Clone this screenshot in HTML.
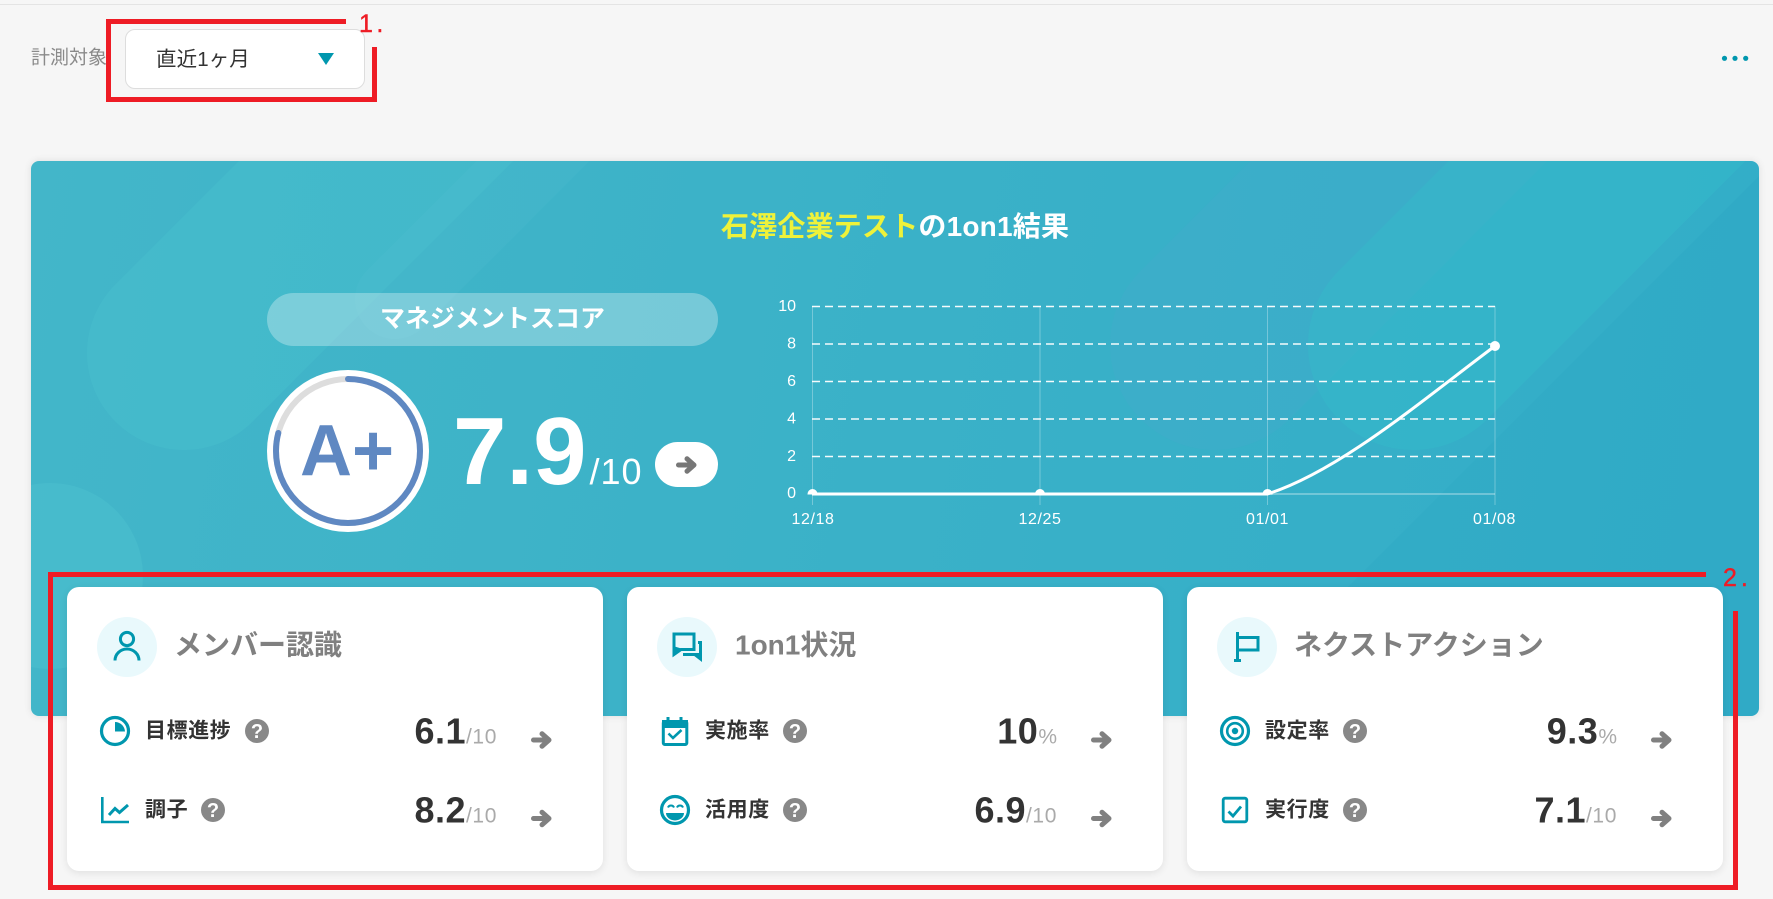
<!DOCTYPE html>
<html lang="ja"><head><meta charset="utf-8"><title>1on1結果</title>
<style>
html,body{margin:0;padding:0;width:1773px;height:899px;overflow:hidden;background:#f6f6f6}
body{position:relative;font-family:"Liberation Sans","Noto Sans CJK JP",sans-serif}
.a{position:absolute;box-sizing:border-box}
.card{position:absolute;top:587px;width:536px;height:284px;background:#fff;border-radius:12px;box-shadow:0 2px 8px rgba(0,0,0,.09)}
.r{position:absolute;background:#ee1c25}
svg{position:absolute;left:0;top:0}
text{font-family:"Liberation Sans","Noto Sans CJK JP",sans-serif}
</style></head><body>
<div class="a" style="left:0;top:4px;width:1773px;height:1px;background:#e4e4e4"></div>
<div class="a" style="left:125px;top:29px;width:240px;height:60px;background:#fff;border:1px solid #ddd;border-radius:10px"></div>
<div class="a" style="left:31px;top:161px;width:1728px;height:555px;border-radius:8px;overflow:hidden;box-shadow:0 0 8px rgba(0,0,0,.1);background:linear-gradient(100deg,#43b6c9 0%,#3ab1c8 50%,#32adc8 100%)">
<svg width="1728" height="555" viewBox="31 161 1728 555" fill="none">
<g stroke-linecap="round">
<path d="M184 353L600 -63" stroke="#4cc6d2" stroke-opacity=".3" stroke-width="194"/>
<path d="M395 299L800 -106" stroke="#5cc9d6" stroke-opacity=".14" stroke-width="80"/>
<path d="M1215 345L1600 -40" stroke="#4aaace" stroke-opacity=".26" stroke-width="210"/>
<path d="M1413 345L1800 -42" stroke="#35bdca" stroke-opacity=".38" stroke-width="210"/>
</g>
<circle cx="50" cy="576" r="93" fill="#55c6d2" fill-opacity=".32"/>
<path d="M1759 176V716H1219Z" fill="#28a0bd" fill-opacity=".2"/>
</svg></div>
<div class="a" style="left:267px;top:293px;width:451px;height:53px;border-radius:27px;background:rgba(255,255,255,.3)"></div>
<div class="a" style="left:267px;top:370px;width:162px;height:162px;border-radius:50%;background:#fff"></div>
<div class="a" style="left:655px;top:442px;width:63px;height:45px;border-radius:23px;background:#fff"></div>
<div class="card" style="left:67px"></div>
<div class="card" style="left:627px"></div>
<div class="card" style="left:1187px"></div>
<div class="r" style="left:106px;top:19px;width:240px;height:5px"></div>
<div class="r" style="left:106px;top:19px;width:5px;height:83px"></div>
<div class="r" style="left:106px;top:97px;width:271px;height:5px"></div>
<div class="r" style="left:372px;top:47px;width:5px;height:55px"></div>
<div class="r" style="left:48px;top:572px;width:1658px;height:5px"></div>
<div class="r" style="left:48px;top:572px;width:5px;height:318px"></div>
<div class="r" style="left:48px;top:885px;width:1690px;height:5px"></div>
<div class="r" style="left:1733px;top:611px;width:5px;height:279px"></div>

<svg width="1773" height="899" viewBox="0 0 1773 899" fill="none">
<text x="359" y="32" font-size="25" fill="#ee1c25" stroke="#ee1c25" stroke-width=".4" letter-spacing="3.5">1.</text>
<text x="1723" y="586" font-size="25" fill="#ee1c25" stroke="#ee1c25" stroke-width=".4" letter-spacing="4">2.</text>
<text x="31" y="63.5" font-size="19" fill="#8a8a8a">計測対象</text>
<text x="156" y="66" font-size="20.5" fill="#333" letter-spacing=".1">直近1ヶ月</text>
<path d="M318 53H334L326 65Z" fill="#0097ae"/>
<circle cx="1724.5" cy="58.3" r="2.6" fill="#0097ae"/><circle cx="1735" cy="58.3" r="2.6" fill="#0097ae"/><circle cx="1745.7" cy="58.3" r="2.6" fill="#0097ae"/>

<text x="721" y="236" font-size="28" font-weight="700" letter-spacing=".2"><tspan fill="#eef23a">石澤企業テスト</tspan><tspan fill="#fff">の1on1結果</tspan></text>
<text x="380" y="327" font-size="25" font-weight="700" fill="#fff">マネジメントスコア</text>

<circle cx="348" cy="451" r="72" stroke="#ddd" stroke-width="6"/>
<circle cx="348" cy="451" r="72" stroke="#5f88c2" stroke-width="6" stroke-linecap="round" stroke-dasharray="357.4 500" transform="rotate(-90 348 451)"/>
<text x="300" y="475" font-size="72" font-weight="700" fill="#5f88c2">A+</text>
<text x="453" y="484" fill="#fff"><tspan font-size="96" font-weight="700">7.9</tspan><tspan font-size="36" dx="3" letter-spacing="1">/10</tspan></text>
<g transform="translate(676 456)"><path d="M2.5 9H17M11 2.8L18 9L11 15.2" stroke="#777" stroke-width="5" stroke-linecap="round" stroke-linejoin="round"/></g>

<g stroke="#fff" stroke-opacity=".3"><path d="M812.5 306V505M1040 306V505M1267.5 306V505M1495 306V505"/><path d="M1267 494H1495" stroke-width="2"/></g>
<g stroke="#fff" stroke-width="1.5" stroke-dasharray="8 5" stroke-opacity=".95"><path d="M812 306.5H1495M812 344H1495M812 381.5H1495M812 419H1495M812 456.5H1495"/></g>
<clipPath id="c"><rect x="800" y="300" width="710" height="194.5"/></clipPath>
<g clip-path="url(#c)" fill="#fff"><circle cx="812.5" cy="494" r="5"/><circle cx="1040" cy="494" r="5"/><circle cx="1267.5" cy="494" r="5"/><circle cx="1495" cy="346" r="5"/></g>
<path d="M812 494H1267.5C1340 471 1425 398 1495 346" stroke="#fff" stroke-width="3"/>
<g fill="#fff" font-size="16" text-anchor="end">
<text x="796" y="311">10</text><text x="796" y="348.5">8</text><text x="796" y="386">6</text><text x="796" y="423.5">4</text><text x="796" y="461">2</text><text x="796" y="498">0</text></g>
<g fill="#fff" font-size="16" letter-spacing=".6" text-anchor="middle">
<text x="813" y="524">12/18</text><text x="1040" y="524">12/25</text><text x="1267.5" y="524">01/01</text><text x="1494.5" y="524">01/08</text></g>

<!-- header circles -->
<circle cx="127" cy="647" r="30" fill="#e9f9fc"/><circle cx="687" cy="647" r="30" fill="#e9f9fc"/><circle cx="1247" cy="647" r="30" fill="#e9f9fc"/>
<g stroke="#0097ae" stroke-width="3">
<circle cx="127" cy="639" r="6.6"/><path d="M115 660.5a12 11.5 0 0 1 24 0"/>
<path d="M674 634H694V649.5H681L674 654.5Z"/><path d="M698 642.5H700.5V659M700 654.5H683"/>
<path d="M1237.5 632V660.5M1234 660.5H1241"/><path d="M1238 637.5H1258V650H1238"/>
</g>
<path d="M673 646V656L683 649Z" fill="#0097ae"/><path d="M691 653.5L702 662V653.5Z" fill="#0097ae"/>
<g font-size="28" font-weight="700" fill="#808080">
<text x="174" y="654.5">メンバー認識</text><text x="735" y="654.5">1on1状況</text><text x="1294" y="654.5">ネクストアクション</text></g>

<!-- row icons -->
<g stroke="#0097ae" fill="none">
<circle cx="115" cy="731" r="13.5" stroke-width="3.2"/><path d="M115 722V731.5H125A10 10 0 0 0 115 722Z" fill="#0097ae" stroke="none"/>
<path d="M102.3 797V822H129" stroke-width="2.6"/><path d="M109 815L115 808.5L119.5 812.5L128 805" stroke-width="3"/>
<rect x="663.3" y="721.5" width="23.5" height="23" rx="1.5" stroke-width="3"/><path d="M662 720H688V728H662Z" fill="#0097ae" stroke="none"/><path d="M668 717V722M681 717V722" stroke-width="3"/><path d="M668.5 733.5L673 738L681.5 730" stroke-width="2.6"/>
<circle cx="675" cy="810" r="13.5" stroke-width="3.2"/><path d="M668 807.5a3.2 3 0 0 1 6 0M677 807.5a3.2 3 0 0 1 6 0" stroke-width="2"/><path d="M666 813H684A9 7.5 0 0 1 666 813Z" fill="#0097ae" stroke="none"/>
<circle cx="1235" cy="731" r="13.5" stroke-width="3.2"/><circle cx="1235" cy="731" r="7.8" stroke-width="2.6"/><circle cx="1235" cy="731" r="3.2" fill="#0097ae" stroke="none"/>
<rect x="1223.2" y="798.2" width="23.6" height="23.6" rx="2" stroke-width="2.8"/><path d="M1228.5 811.5L1233 816L1241 806.5" stroke-width="2.8"/>
</g>
<g font-size="21" font-weight="700" fill="#333" letter-spacing=".6">
<text x="145" y="737.5">目標進捗</text><text x="145" y="816.5">調子</text>
<text x="705" y="737.5">実施率</text><text x="705" y="816.5">活用度</text>
<text x="1265" y="737.5">設定率</text><text x="1265" y="816.5">実行度</text></g>

<g fill="#888"><circle cx="257" cy="731" r="12"/><circle cx="213" cy="810" r="12"/><circle cx="795" cy="731" r="12"/><circle cx="795" cy="810" r="12"/><circle cx="1355" cy="731" r="12"/><circle cx="1355" cy="810" r="12"/></g>
<g fill="#fff" font-size="20" font-weight="700" text-anchor="middle">
<text x="257" y="738">?</text><text x="213" y="817">?</text><text x="795" y="738">?</text><text x="795" y="817">?</text><text x="1355" y="738">?</text><text x="1355" y="817">?</text></g>

<g fill="#333" text-anchor="end">
<text x="497" y="743.5"><tspan font-size="36" font-weight="700" letter-spacing=".5">6.1</tspan><tspan font-size="21" fill="#aaa" letter-spacing=".6">/10</tspan></text>
<text x="497" y="822.5"><tspan font-size="36" font-weight="700" letter-spacing=".5">8.2</tspan><tspan font-size="21" fill="#aaa" letter-spacing=".6">/10</tspan></text>
<text x="1057" y="743.5"><tspan font-size="36" font-weight="700" letter-spacing=".5">10</tspan><tspan font-size="21" fill="#aaa">%</tspan></text>
<text x="1057" y="822.5"><tspan font-size="36" font-weight="700" letter-spacing=".5">6.9</tspan><tspan font-size="21" fill="#aaa" letter-spacing=".6">/10</tspan></text>
<text x="1617" y="743.5"><tspan font-size="36" font-weight="700" letter-spacing=".5">9.3</tspan><tspan font-size="21" fill="#aaa">%</tspan></text>
<text x="1617" y="822.5"><tspan font-size="36" font-weight="700" letter-spacing=".5">7.1</tspan><tspan font-size="21" fill="#aaa" letter-spacing=".6">/10</tspan></text>
</g>
<g stroke="#808080" stroke-width="5" stroke-linecap="round" stroke-linejoin="round">
<path transform="translate(531 731)" d="M2.5 9H17M11 2.8L18 9L11 15.2"/>
<path transform="translate(531 809.5)" d="M2.5 9H17M11 2.8L18 9L11 15.2"/>
<path transform="translate(1091 731)" d="M2.5 9H17M11 2.8L18 9L11 15.2"/>
<path transform="translate(1091 809.5)" d="M2.5 9H17M11 2.8L18 9L11 15.2"/>
<path transform="translate(1651 731)" d="M2.5 9H17M11 2.8L18 9L11 15.2"/>
<path transform="translate(1651 809.5)" d="M2.5 9H17M11 2.8L18 9L11 15.2"/>
</g>
</svg>
</body></html>
